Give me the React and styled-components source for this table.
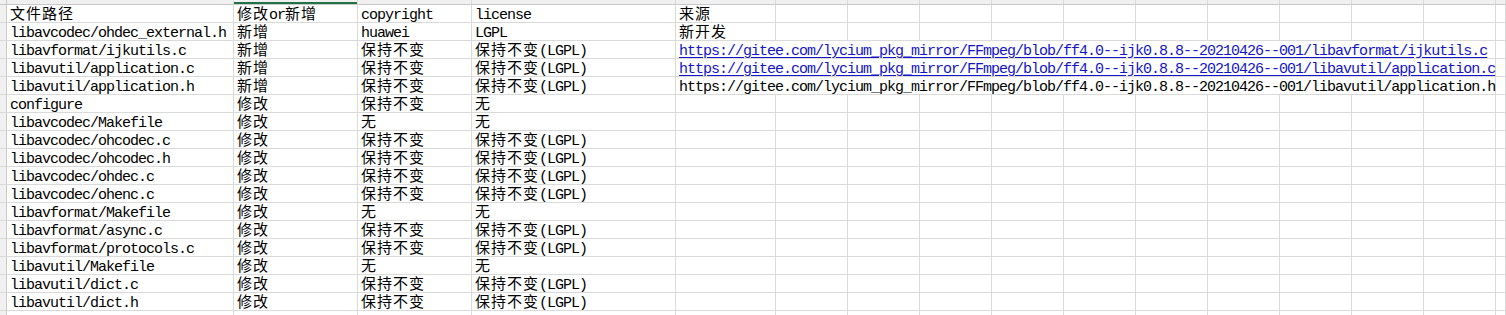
import React from "react";
import styled, { createGlobalStyle } from "styled-components";

const GlobalStyle = createGlobalStyle`
  html, body {
    margin: 0;
    padding: 0;
    background: #ffffff;
    overflow: hidden;
  }
`;

const GRID = "#dadada";
const CJK = /([\u2e80-\u9fff\uff00-\uffef]+)/;

const base = "https://gitee.com/lycium_pkg_mirror/FFmpeg/blob/ff4.0--ijk0.8.8--20210426--001/";

const rows = [
  ["文件路径", "修改or新增", "copyright", "license", { text: "来源" }],
  ["libavcodec/ohdec_external.h", "新增", "huawei", "LGPL", { text: "新开发" }],
  ["libavformat/ijkutils.c", "新增", "保持不变", "保持不变(LGPL)", { text: base + "libavformat/ijkutils.c", link: true, span: 11 }],
  ["libavutil/application.c", "新增", "保持不变", "保持不变(LGPL)", { text: base + "libavutil/application.c", link: true, span: 11 }],
  ["libavutil/application.h", "新增", "保持不变", "保持不变(LGPL)", { text: base + "libavutil/application.h", span: 11 }],
  ["configure", "修改", "保持不变", "无"],
  ["libavcodec/Makefile", "修改", "无", "无"],
  ["libavcodec/ohcodec.c", "修改", "保持不变", "保持不变(LGPL)"],
  ["libavcodec/ohcodec.h", "修改", "保持不变", "保持不变(LGPL)"],
  ["libavcodec/ohdec.c", "修改", "保持不变", "保持不变(LGPL)"],
  ["libavcodec/ohenc.c", "修改", "保持不变", "保持不变(LGPL)"],
  ["libavformat/Makefile", "修改", "无", "无"],
  ["libavformat/async.c", "修改", "保持不变", "保持不变(LGPL)"],
  ["libavformat/protocols.c", "修改", "保持不变", "保持不变(LGPL)"],
  ["libavutil/Makefile", "修改", "无", "无"],
  ["libavutil/dict.c", "修改", "保持不变", "保持不变(LGPL)"],
  ["libavutil/dict.h", "修改", "保持不变", "保持不变(LGPL)"],
  [],
];

// columns A..P : A-D fixed, E wide, then ten 72px columns, then the cut-off one
const TOTAL_COLS = 16;

const Txt = ({ children }) =>
  String(children)
    .split(CJK)
    .map((part, i) => (CJK.test(part) ? <Han key={i}>{part}</Han> : part));

const App = () => {
  const body = [];
  rows.forEach((r, ri) => {
    body.push(<RowHead key={`h${ri}`} />);
    for (let c = 0; c < 4; c++) {
      body.push(
        <Cell key={`${ri}-${c}`}>
          {r[c] ? <Txt>{r[c]}</Txt> : null}
        </Cell>
      );
    }
    const e = r[4];
    let used = 4;
    if (e) {
      body.push(
        <Cell key={`${ri}-e`} $span={e.span || 1} $link={e.link}>
          <Txt>{e.text}</Txt>
        </Cell>
      );
      used += e.span || 1;
    }
    for (let c = used; c < TOTAL_COLS; c++) {
      body.push(<Cell key={`${ri}-${c}`} />);
    }
  });

  return (
    <>
      <GlobalStyle />
      <Sheet>
        <Corner />
        {Array.from({ length: TOTAL_COLS }).map((_, i) => (
          <ColHead key={i} $selected={i === 1} />
        ))}
        {body}
      </Sheet>
    </>
  );
};

export default App;

const Sheet = styled.div`
  display: grid;
  grid-template-columns: 7px 227px 124px 114px 204px 100px repeat(10, 72px) 1fr;
  grid-auto-rows: 18px;
  grid-template-rows: 5px;
  width: 100vw;
  background: #ffffff;
  font-family: "Liberation Mono", "Noto Sans CJK SC", monospace;
  font-size: 15px;
  letter-spacing: -1px;
  color: #000000;
`;

const Corner = styled.div`
  background: #f0f0f0;
  border-right: 1px solid #c8c8c8;
  border-bottom: 1px solid #c8c8c8;
`;

const ColHead = styled.div`
  background: #f0f0f0;
  border-right: 1px solid ${GRID};
  border-bottom: 1px solid #c8c8c8;
  box-shadow: ${({ $selected }) => ($selected ? "inset 0 -2px 0 #217346" : "none")};
`;

const RowHead = styled.div`
  background: #f0f0f0;
  border-right: 1px solid #c8c8c8;
  border-bottom: 1px solid ${GRID};
`;

const Cell = styled.div`
  grid-column: span ${({ $span }) => $span || 1};
  box-sizing: border-box;
  border-right: 1px solid ${GRID};
  border-bottom: 1px solid ${GRID};
  padding: 3px 0 0 3px;
  line-height: 15px;
  white-space: nowrap;
  overflow: visible;
  color: ${({ $link }) => ($link ? "#1414c8" : "#000000")};
  text-decoration: ${({ $link }) => ($link ? "underline" : "none")};
  text-underline-offset: 2px;
`;

const Han = styled.span`
  font-family: "Noto Sans CJK SC", sans-serif;
  font-size: 15px;
  letter-spacing: 1px;
  line-height: 8px;
`;
